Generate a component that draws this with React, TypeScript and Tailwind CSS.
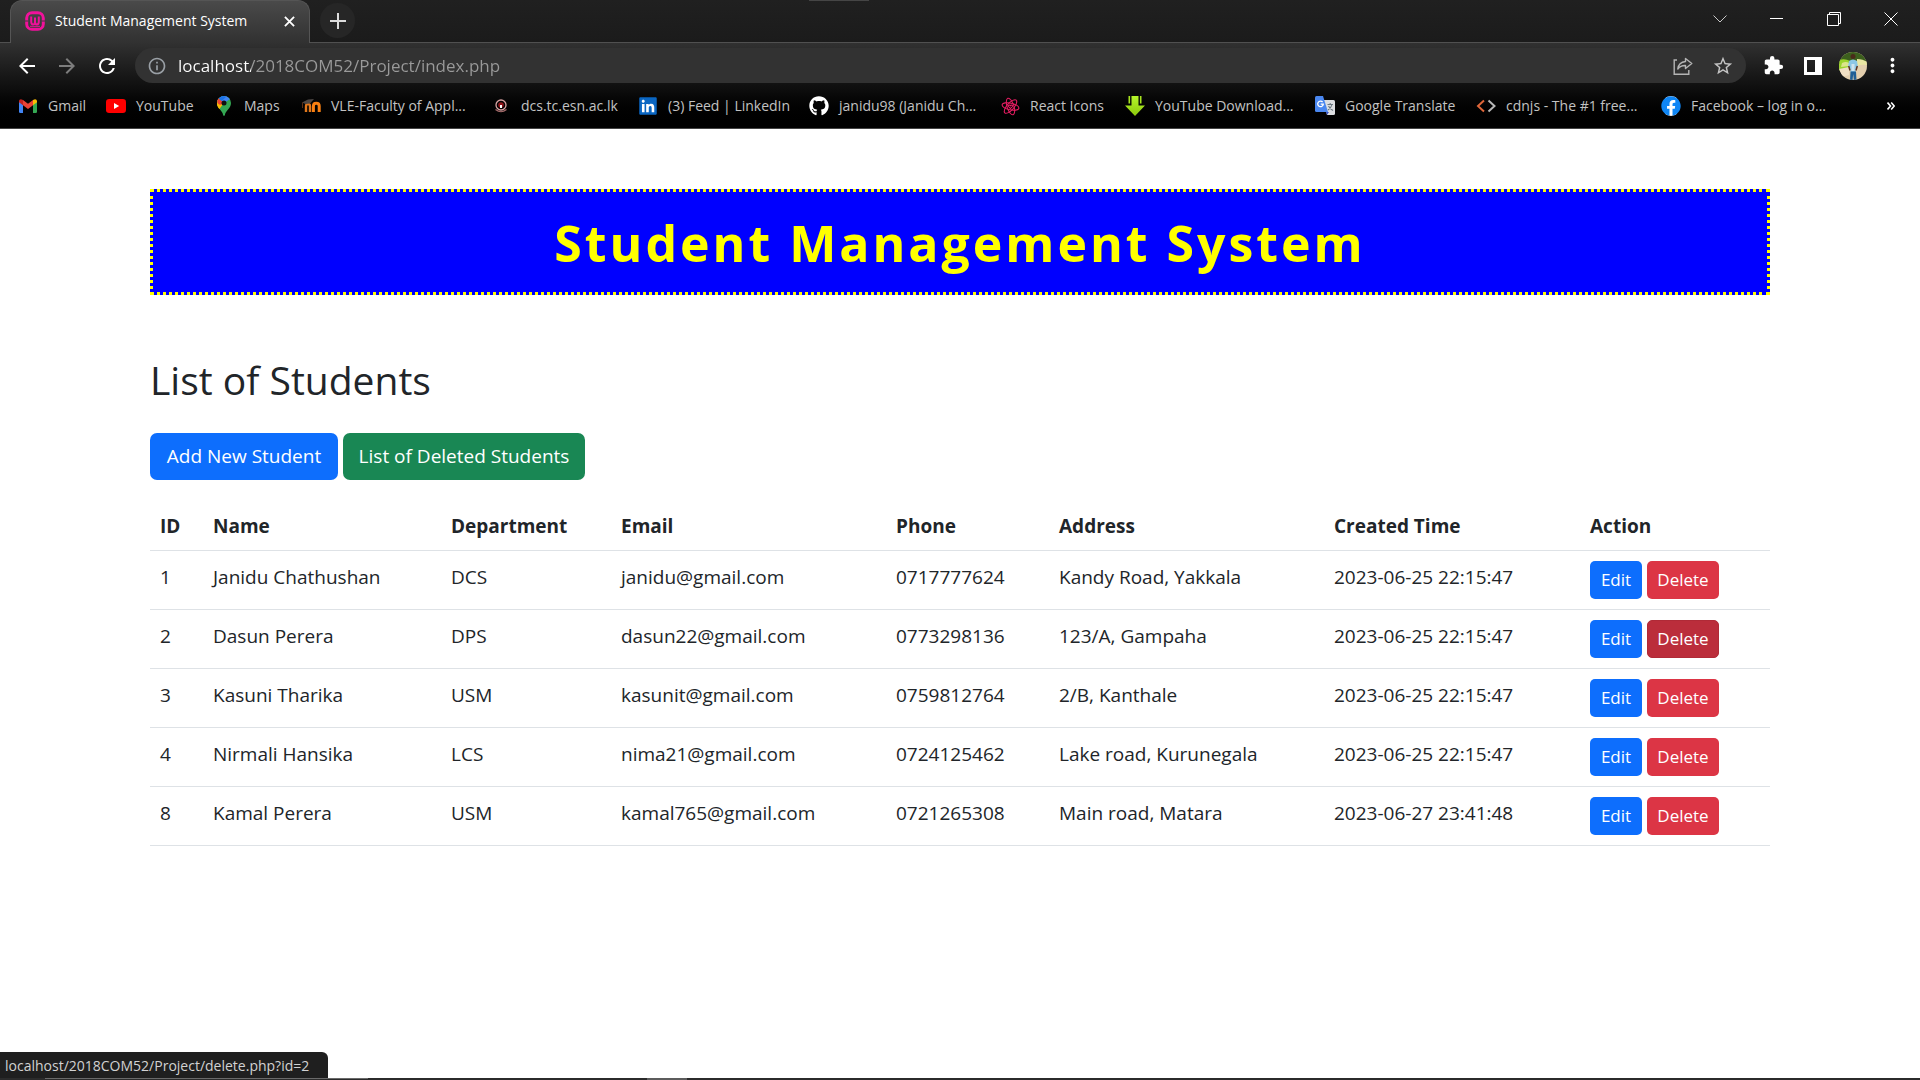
import React from "react";
import {
  MdArrowBack,
  MdArrowForward,
  MdExtension,
  MdInfoOutline,
  MdMoreVert,
  MdRefresh,
  MdStarOutline,
} from "react-icons/md";
import { FaFacebook, FaGithub, FaLinkedin } from "react-icons/fa";

/* ---------- favicons ---------- */

function WampIcon() {
  return (
    <svg viewBox="0 0 20 20" className="size-5 shrink-0" fill="none" stroke="#f0119b" aria-hidden="true">
      <rect x="1.7" y="1.7" width="16.6" height="16.6" rx="5.4" strokeWidth="3" />
      <path d="M0 10h3.5M16.500 10H20" stroke="#3c3c3c" strokeWidth="1" />
      <path d="M6.200 5.600v5.200q0 2.600 1.900 2.600t1.900-2.600V6.500v4.300q0 2.600 1.900 2.600t1.900-2.600V5.600" strokeWidth="2" />
      <path d="M5 15.300h10" strokeWidth="1" />
    </svg>
  );
}

function GmailIcon() {
  return (
    <svg viewBox="0 0 18 14" className="h-[14px] w-[18px]" aria-hidden="true">
      <path d="M0 2.200v10.500Q0 14 1.300 14H4V5.500z" fill="#4285f4" />
      <path d="M18 2.200v10.500q0 1.300-1.300 1.300H14V5.500z" fill="#34a853" />
      <path d="M4 1.100l5 3.700 5-3.700v5.200l-5 3.800-5-3.800z" fill="#ea4335" />
      <path d="M0 2.200C0 .3 2-.5 3.400.7L4 1.100v5.200L0 3.300z" fill="#c5221f" />
      <path d="M18 2.200C18 .3 16-.5 14.600.7L14 1.100v5.200l4-3z" fill="#fbbc04" />
    </svg>
  );
}

function YouTubeIcon() {
  return (
    <svg viewBox="0 0 20 14" className="h-[14px] w-5" aria-hidden="true">
      <rect width="20" height="14" rx="3.2" fill="#f00" />
      <path d="M8 4l5.200 3L8 10z" fill="#fff" />
    </svg>
  );
}

function MapsIcon() {
  return (
    <svg viewBox="0 0 14 20" className="h-5 w-[14px]" aria-hidden="true">
      <defs>
        <clipPath id="pin">
          <path d="M7 0a7 7 0 0 1 7 7c0 3-1.500 4.700-3 6.600C9.300 15.700 8.300 17 7.800 19.200q-.8 1.500-1.600 0C5.700 17 4.700 15.700 3 13.600 1.500 11.700 0 10 0 7a7 7 0 0 1 7-7z" />
        </clipPath>
      </defs>
      <g clipPath="url(#pin)">
        <rect width="14" height="20" fill="#34a853" />
        <path d="M0 0h14v2.500L7 7 0 5z" fill="#4285f4" />
        <path d="M0 2l1.600.5L7 7l-5.500 6.500L0 11z" fill="#fbbc04" />
        <path d="M0 1.800h1.600L7 7 2.500 9.500 0 6z" fill="#ea4335" />
        <path d="M1.600 2.500L4.700 5 9.500.5 5 0z" fill="#1a73e8" />
        <path d="M0 8l2 .5L5.200 9 2 13.500 0 12z" fill="#fbbc04" />
      </g>
      <circle cx="7" cy="7" r="2.500" fill="#111" />
    </svg>
  );
}

function MoodleIcon() {
  return (
    <svg viewBox="0 0 20 16" className="h-4 w-5" fill="none" aria-hidden="true">
      <path d="M5 14V8.500q0-2.500 2-2.500t2 2.500V14" stroke="#e0771c" strokeWidth="2.400" />
      <path d="M12.400 14V8q0-2.800 2.900-2.800T18.200 8v6" stroke="#f98012" strokeWidth="3" />
      <path d="M1 4.500L7 1.500 13 1 9 5.500 4.500 6z" fill="#4d4744" />
      <path d="M1.500 4.500V10" stroke="#5b2f14" strokeWidth="1" />
    </svg>
  );
}

function CampusIcon() {
  return (
    <svg viewBox="0 0 14 14" className="size-[14px]" fill="none" aria-hidden="true">
      <circle cx="7" cy="6" r="5" stroke="#d9a3a3" strokeWidth="1.300" />
      <circle cx="7" cy="6" r="2.800" fill="#8e1318" />
      <rect x="6" y="6" width="2" height="3" fill="#fff" />
      <path d="M1.500 10.500Q7 15 12.500 10.500" stroke="#a46a6a" strokeWidth="1.200" />
    </svg>
  );
}

function LinkedInIcon() {
  return (
    <span className="flex size-[18px] items-center justify-center rounded-xs bg-[linear-gradient(#fff,#fff)] bg-[length:14px_14px] bg-center bg-no-repeat">
      <FaLinkedin className="size-[20px] shrink-0 text-[#0a66c2]" />
    </span>
  );
}

function ReactIconsIcon() {
  return (
    <svg viewBox="0 0 20 20" className="size-[19px]" fill="none" stroke="#e91e63" strokeWidth="1.100" aria-hidden="true">
      <g transform="rotate(12 10 10)">
        <ellipse cx="10" cy="10" rx="9" ry="3.600" />
        <ellipse cx="10" cy="10" rx="9" ry="3.600" transform="rotate(60 10 10)" />
        <ellipse cx="10" cy="10" rx="9" ry="3.600" transform="rotate(120 10 10)" />
      </g>
      <path d="M10 12.200L7.900 10q-.5-1.500 1-1.600.7 0 1.100.7.400-.7 1.100-.7 1.500.1 1 1.600z" />
    </svg>
  );
}

function DownloadIcon() {
  return (
    <svg viewBox="0 0 20 20" className="size-5" aria-hidden="true">
      <defs>
        <linearGradient id="lime" x1="0" y1="0" x2="0" y2="1">
          <stop offset="0" stopColor="#b6f52a" />
          <stop offset="1" stopColor="#8cc80c" />
        </linearGradient>
      </defs>
      <path d="M6.500 0h7v9.500H20L10 20 0 9.500h6.500z" fill="url(#lime)" />
      <path d="M4.300 0v7.500M15.700 0v7.500" stroke="#a6e31f" strokeWidth="1.600" />
    </svg>
  );
}

function TranslateIcon() {
  return (
    <svg viewBox="0 0 20 20" className="size-5" fill="none" aria-hidden="true">
      <path d="M8 4h10.500q1.500 0 1.500 1.500v12q0 1.500-1.500 1.500H12z" fill="#dcdee1" />
      <path d="M12.500 8.500H18M15.200 7v1.500M17 8.500q-.8 3.500-4 5.500M13.500 10q1.500 3 4.500 4.500" stroke="#6b7780" strokeWidth="1.100" />
      <path d="M11 16h3l-2 3z" fill="#3a53c5" />
      <path d="M1.500 0H8l5 16H1.500Q0 16 0 14.500v-13Q0 0 1.500 0z" fill="#4a87f0" />
      <path d="M7.600 6A2.800 2.800 0 1 0 8.300 8.200H5.700" stroke="#fff" strokeWidth="1.300" />
    </svg>
  );
}

function CdnjsIcon() {
  return (
    <svg viewBox="0 0 20 14" className="h-[14px] w-5" fill="none" strokeWidth="2" aria-hidden="true">
      <path d="M8 1.500L2 7l6 5.500" stroke="#e0673a" />
      <path d="M12.500 1.500l6 5.500-6 5.500" stroke="#b9b9b9" />
    </svg>
  );
}

function FacebookIcon() {
  return (
    <span className="flex size-5 items-center justify-center rounded-full bg-[linear-gradient(#fff,#fff)] bg-[length:12px_20px] bg-center bg-no-repeat">
      <FaFacebook className="size-5 text-[#0f86f5]" />
    </span>
  );
}

/* ---------- browser chrome ---------- */

function ShareIcon() {
  return (
    <svg viewBox="0 0 20 20" className="size-5" fill="none" stroke="#b4b4b4" strokeWidth="1.400" aria-hidden="true">
      <path d="M4 4H1.200v14.300h14.600V14" />
      <path d="M12.500 2.500L18.800 7.500l-6.300 5V9.500Q7.500 9.300 4.800 13 5.500 6.300 12.500 5.500z" strokeLinejoin="round" />
    </svg>
  );
}

function Avatar() {
  return (
    <svg viewBox="0 0 28 28" className="size-7" aria-hidden="true">
      <defs>
        <clipPath id="face">
          <circle cx="14" cy="14" r="14" />
        </clipPath>
      </defs>
      <g clipPath="url(#face)">
        <rect width="28" height="28" fill="#e3cfae" />
        <path d="M0 0h28v9q-5 3-14 2T0 12z" fill="#3c5f1d" />
        <path d="M0 8q6-2 11 1v7l-11 3z" fill="#9bd42b" />
        <path d="M3 11q4-2 7 0v3l-8 1z" fill="#dbe58a" />
        <path d="M18 7q6 0 10 3v3q-6-1-10 1z" fill="#e9e6a3" />
        <path d="M0 17l10-2v8l-7 2z" fill="#f0dfc4" />
        <circle cx="14" cy="4.500" r="2.500" fill="#4a2a1a" />
        <path d="M10 9q4-3 8 0l1 6h-2l-.5 5h-5l-.5-5H9z" fill="#8cc7e6" />
        <path d="M12.500 12h3v7h-3z" fill="#cfe4ee" />
        <path d="M11.500 19.500h5.500l.5 8.500h-2.700l-.6-6-.6 6h-2.600z" fill="#1f5f96" />
        <path d="M9.700 14l1.300 4.500M18.300 14L17 18.500" stroke="#5d3420" strokeWidth="1.500" />
      </g>
    </svg>
  );
}

const bookmarks = [
  { label: "Gmail", icon: <GmailIcon />, width: "w-[88px]" },
  { label: "YouTube", icon: <YouTubeIcon />, width: "w-[108px]" },
  { label: "Maps", icon: <MapsIcon />, width: "w-[87px]" },
  { label: "VLE-Faculty of Appl...", icon: <MoodleIcon />, width: "w-[190px]" },
  { label: "dcs.tc.esn.ac.lk", icon: <CampusIcon />, width: "w-[147px]" },
  { label: "(3) Feed | LinkedIn", icon: <LinkedInIcon />, width: "w-[171px]" },
  { label: "janidu98 (Janidu Ch...", icon: <FaGithub className="size-5 text-white" />, width: "w-[191px]" },
  { label: "React Icons", icon: <ReactIconsIcon />, width: "w-[125px]" },
  { label: "YouTube Download...", icon: <DownloadIcon />, width: "w-[190px]" },
  { label: "Google Translate", icon: <TranslateIcon />, width: "w-[161px]" },
  { label: "cdnjs - The #1 free...", icon: <CdnjsIcon />, width: "w-[185px]" },
  { label: "Facebook – log in o...", icon: <FacebookIcon />, width: "w-[185px]" },
];

function TabStrip() {
  return (
    <div className="relative flex h-[43px] items-end border-b border-[#505050] bg-linear-to-b from-[#202020] to-[#1b1b1b]">
      <span className="absolute top-0 left-[809px] h-px w-[60px] bg-[#454545]" />
      <div className="-mb-px ml-[10px] flex h-[43px] w-[300px] items-center rounded-t-xl border-x border-t border-[#555] bg-linear-to-b from-[#4a4a4a] to-[#313131] pr-3 pb-[2px] pl-[14px]">
        <WampIcon />
        <span className="ml-[10px] flex-1 text-sm whitespace-nowrap text-white">Student Management System</span>
        <button aria-label="Close tab" className="flex size-4 items-center justify-center">
          <svg viewBox="0 0 12 12" className="size-[11px]" stroke="#fff" strokeWidth="2" aria-hidden="true">
            <path d="M1 1l10 10M11 1L1 11" />
          </svg>
        </button>
      </div>
      <button aria-label="New tab" className="mb-1 ml-[10px] flex size-[35px] items-center justify-center rounded-full bg-[#262626]">
        <svg viewBox="0 0 16 16" className="size-4" stroke="#dcdcdc" strokeWidth="2" aria-hidden="true">
          <path d="M8 0v16M0 8h16" />
        </svg>
      </button>
      <div className="mr-px ml-auto flex h-[37px] items-center self-start text-white">
        <button aria-label="Search tabs" className="flex w-[57px] justify-center">
          <svg viewBox="0 0 14 8" className="h-2 w-[14px]" fill="none" stroke="#c8c8c8" aria-hidden="true">
            <path d="M.5.5L7 7 13.500.5" />
          </svg>
        </button>
        <button aria-label="Minimize" className="flex w-[57px] justify-center">
          <span className="h-px w-[13px] bg-white" />
        </button>
        <button aria-label="Restore" className="flex w-[57px] justify-center">
          <svg viewBox="0 0 14 14" className="size-[14px]" fill="none" stroke="#fff" aria-hidden="true">
            <path d="M.5 2.500h11v11H.5zM2.500 2.500v-2h11v11h-2" />
          </svg>
        </button>
        <button aria-label="Close window" className="flex w-[57px] justify-center">
          <svg viewBox="0 0 14 14" className="size-[14px]" stroke="#fff" aria-hidden="true">
            <path d="M.5.5l13 13M13.500.5l-13 13" />
          </svg>
        </button>
      </div>
    </div>
  );
}

function Toolbar() {
  return (
    <div className="flex h-[45px] items-center pr-4 pl-[15px]">
      <button aria-label="Back" className="mr-4">
        <MdArrowBack className="size-6 text-white" />
      </button>
      <button aria-label="Forward" className="mr-4">
        <MdArrowForward className="size-6 text-[#7d7d7d]" />
      </button>
      <button aria-label="Reload" className="mr-4">
        <MdRefresh className="size-6 text-white" />
      </button>
      <div className="flex h-[35px] flex-1 items-center rounded-full bg-[#323232] pr-3 pl-3">
        <MdInfoOutline className="size-5 text-[#9aa0a6]" />
        <input
          aria-label="Address"
          defaultValue="localhost/2018COM52/Project/index.php"
          className="ml-[11px] min-w-0 flex-1 bg-[linear-gradient(90deg,#fff_73px,#9a9a9a_73px)] bg-clip-text text-[17px] leading-6 text-transparent outline-none"
        />
        <button aria-label="Share" className="mr-[19px]">
          <ShareIcon />
        </button>
        <button aria-label="Bookmark this tab">
          <MdStarOutline className="size-[22px] text-[#c4c4c4]" />
        </button>
      </div>
      <button aria-label="Extensions" className="ml-[17px]">
        <MdExtension className="size-[21px] text-white" />
      </button>
      <button aria-label="Side panel" className="ml-5">
        <svg viewBox="0 0 18 18" className="size-[18px]" aria-hidden="true">
          <path d="M0 0h18v18H0zM3 3v12h8V3z" fill="#fff" fillRule="evenodd" />
        </svg>
      </button>
      <button aria-label="Profile" className="ml-[17px]">
        <Avatar />
      </button>
      <button aria-label="Menu" className="ml-[14px]">
        <MdMoreVert className="size-[23px] text-white" />
      </button>
    </div>
  );
}

function BookmarksBar() {
  return (
    <nav aria-label="Bookmarks" className="flex h-[41px] items-center border-b border-[#444] pb-1 pl-[18px]">
      {bookmarks.map((b) => (
        <a key={b.label} href="#" className={"flex shrink-0 items-center whitespace-nowrap " + b.width}>
          <span className="flex w-5 justify-center">{b.icon}</span>
          <span className="ml-[10px] text-sm text-[#c2c2c2]">{b.label}</span>
        </a>
      ))}
      <button aria-label="More bookmarks" className="mr-[25px] ml-auto">
        <svg viewBox="0 0 8 8" className="size-2" fill="none" stroke="#fff" strokeWidth="1.600" aria-hidden="true">
          <path d="M.5.500L3.500 4l-3 3.500M4.200.5l3 3.500-3 3.500" />
        </svg>
      </button>
    </nav>
  );
}

/* ---------- page ---------- */

const columns = [
  { title: "ID", width: "w-[53px]" },
  { title: "Name", width: "w-[238px]" },
  { title: "Department", width: "w-[170px]" },
  { title: "Email", width: "w-[275px]" },
  { title: "Phone", width: "w-[163px]" },
  { title: "Address", width: "w-[275px]" },
  { title: "Created Time", width: "w-[256px]" },
  { title: "Action", width: "w-[190px]" },
];

const students = [
  ["1", "Janidu Chathushan", "DCS", "janidu@gmail.com", "0717777624", "Kandy Road, Yakkala", "2023-06-25 22:15:47"],
  ["2", "Dasun Perera", "DPS", "dasun22@gmail.com", "0773298136", "123/A, Gampaha", "2023-06-25 22:15:47"],
  ["3", "Kasuni Tharika", "USM", "kasunit@gmail.com", "0759812764", "2/B, Kanthale", "2023-06-25 22:15:47"],
  ["4", "Nirmali Hansika", "LCS", "nima21@gmail.com", "0724125462", "Lake road, Kurunegala", "2023-06-25 22:15:47"],
  ["8", "Kamal Perera", "USM", "kamal765@gmail.com", "0721265308", "Main road, Matara", "2023-06-27 23:41:48"],
];

const hoveredId = "2";

function StudentTable() {
  return (
    <table className="mt-5 w-full table-fixed border-collapse text-left">
      <thead>
        <tr className="border-b border-[#dee2e6]">
          {columns.map((c) => (
            <th key={c.title} className={"px-[10px] pt-[11px] pb-[9px] leading-[30px] font-bold " + c.width}>
              {c.title}
            </th>
          ))}
        </tr>
      </thead>
      <tbody>
        {students.map((s) => (
          <tr key={s[0]} className="border-b border-[#dee2e6] align-top">
            {s.map((value, i) => (
              <td key={i} className="px-[10px] pt-[11px] pb-[9px] leading-[30px] whitespace-nowrap">
                {value}
              </td>
            ))}
            <td className="p-[10px]">
              <div className="flex gap-[5px] text-[17px] leading-[38px] text-white">
                <a href="#" className="w-[52px] rounded-[5px] bg-[#0d6efd] text-center">
                  Edit
                </a>
                <a
                  href="#"
                  className={
                    s[0] === hoveredId
                      ? "w-[72px] rounded-[5px] border border-[#b02a37] bg-[#bb2d3b] text-center leading-9"
                      : "w-[72px] rounded-[5px] bg-[#dc3545] text-center"
                  }
                >
                  Delete
                </a>
              </div>
            </td>
          </tr>
        ))}
      </tbody>
    </table>
  );
}

export default function App() {
  return (
    <div className="flex min-h-screen flex-col bg-white font-['Open_Sans','Noto_Sans',sans-serif]">
      <header>
        <TabStrip />
        <div className="bg-linear-to-b from-[#313131] via-[#0d0d0d] via-55% to-black">
          <Toolbar />
          <BookmarksBar />
        </div>
      </header>

      <main className="mx-auto w-full max-w-[1620px] flex-1 text-[19px] text-[#212529]">
        <h1 className="mt-[60px] border-[3px] border-dotted border-[#ff0] bg-[#00f] pt-[21px] pb-[19px] text-center text-[50px] leading-[60px] font-bold tracking-[3px] text-[#ff0]">
          Student Management System
        </h1>
        <h2 className="mt-[61px] text-[39px] leading-[48px] font-medium">List of Students</h2>
        <div className="mt-[29px] flex gap-[5px] leading-[47px] text-white">
          <a href="#" className="w-[188px] rounded-[7px] bg-[#0d6efd] text-center">
            Add New Student
          </a>
          <a href="#" className="w-[242px] rounded-[7px] bg-[#198754] text-center">
            List of Deleted Students
          </a>
        </div>
        <StudentTable />
      </main>

      <footer>
        <p className="h-[26px] w-[328px] rounded-tr-md bg-[#1f1f1f] pl-[5px] text-sm leading-[27px] text-[#d2d2d2]">
          localhost/2018COM52/Project/delete.php?id=2
        </p>
        <div className="flex h-[2px] bg-[#2b2b2b]">
          <span className="ml-[45px] h-px w-[323px] bg-[#6a6a6a]" />
          <span className="ml-[279px] w-10 bg-[#5c5c5c]" />
        </div>
      </footer>
    </div>
  );
}
